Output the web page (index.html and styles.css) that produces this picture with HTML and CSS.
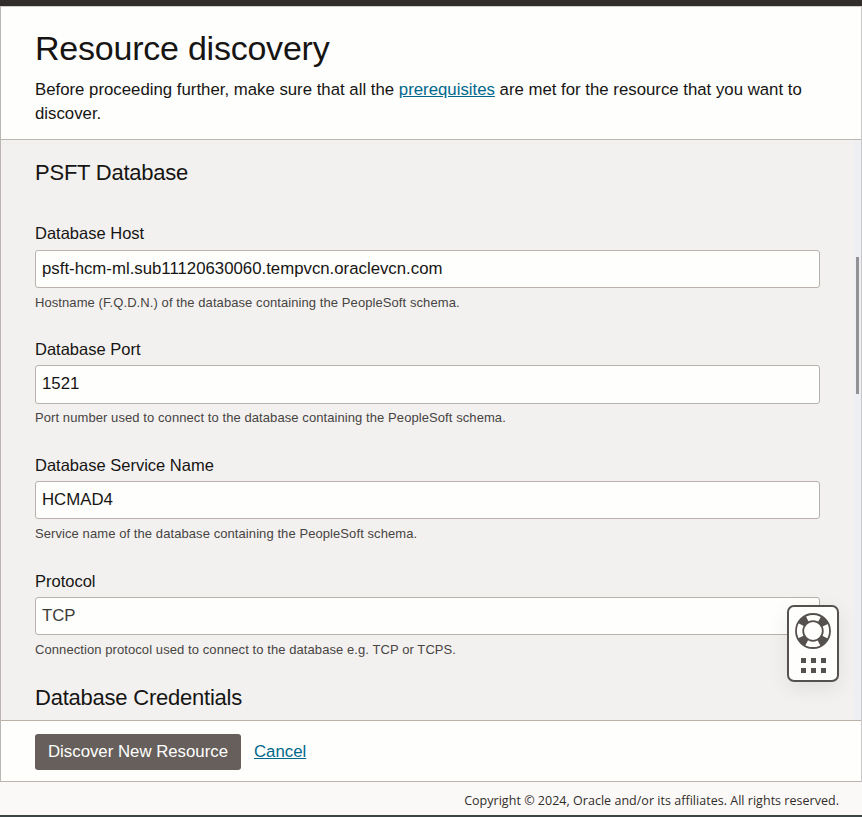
FILE: index.html
```html
<!DOCTYPE html>
<html lang="en">
<head>
<meta charset="utf-8">
<title>Resource discovery</title>
<link rel="stylesheet" href="styles.css">
</head>
<body>
<div class="topbar"></div>
<main class="panel">
  <header class="panel-header">
    <h1>Resource discovery</h1>
    <p>Before proceeding further, make sure that all the <a href="#">prerequisites</a> are met for the resource that you want to discover.</p>
  </header>
  <div class="panel-body">
    <form class="form">
      <h2>PSFT Database</h2>
      <div class="field field-first">
        <label for="host">Database Host</label>
        <input id="host" type="text" value="psft-hcm-ml.sub11120630060.tempvcn.oraclevcn.com">
        <p class="hint">Hostname (F.Q.D.N.) of the database containing the PeopleSoft schema.</p>
      </div>
      <div class="field field-tall">
        <label for="port">Database Port</label>
        <input id="port" type="text" value="1521">
        <p class="hint">Port number used to connect to the database containing the PeopleSoft schema.</p>
      </div>
      <div class="field">
        <label for="service">Database Service Name</label>
        <input id="service" type="text" value="HCMAD4">
        <p class="hint">Service name of the database containing the PeopleSoft schema.</p>
      </div>
      <div class="field">
        <label for="protocol">Protocol</label>
        <input id="protocol" class="muted" type="text" value="TCP">
        <p class="hint">Connection protocol used to connect to the database e.g. TCP or TCPS.</p>
      </div>
      <h2 class="credentials">Database Credentials</h2>
    </form>
    <div class="scroll-track"><div class="scroll-thumb"></div></div>
  </div>
  <div class="actions">
    <button type="button">Discover New Resource</button>
    <a href="#">Cancel</a>
  </div>
</main>
<footer class="copyright">Copyright © 2024, Oracle and/or its affiliates. All rights reserved.</footer>
<div class="help">
  <svg width="36" height="36" viewBox="0 0 36 36" fill="none" stroke="#55514e">
    <circle cx="18" cy="18" r="13.5" stroke-width="7" stroke-dasharray="8.4 12.806" stroke-dashoffset="-6.403"/>
    <circle cx="18" cy="18" r="17" stroke-width="1.8"/>
    <circle cx="18" cy="18" r="9.8" stroke-width="1.8"/>
  </svg>
  <div class="dots"><i></i><i></i><i></i><i></i><i></i><i></i></div>
</div>
</body>
</html>
```
FILE: styles.css
```css
* { box-sizing: border-box; }
body {
  margin: 0;
  height: 817px;
  display: flex;
  flex-direction: column;
  overflow: hidden;
  background: #fbf9f8;
  color: #161513;
  font: 16.8px/24px "Liberation Sans", Arial, sans-serif;
}
h1, h2, p { margin: 0; font-weight: 400; }
a { color: #00688c; text-underline-offset: 1px; }
.topbar { height: 6px; background: #312d2a; }
.panel {
  height: 776px;
  display: flex;
  flex-direction: column;
  border: 1px solid #bcb6b1;
  border-top-color: #d0ccc9;
  border-right-color: #c8c8cb;
  background: #fefefc;
}
.panel-header {
  height: 133px;
  padding: 20px 34px 0;
  border-bottom: 1px solid #bcb6b1;
}
h1 { font-size: 34px; line-height: 42px; margin-bottom: 9px; letter-spacing: -.23px; }
.panel-body {
  height: 580px;
  display: flex;
  overflow: hidden;
  background: #f3f1f0;
}
.form { flex: 1; padding: 19px 34px 0; }
h2 { font-size: 22px; line-height: 28px; letter-spacing: -.23px; }
.credentials { margin-top: -2px; }
.field { height: 116px; }
.field-first { margin-top: 35px; }
label { display: block; height: 27px; font-size: 16.5px; line-height: 22px; }
.field-first label { height: 28px; }
.field input {
  display: block;
  width: 785px;
  height: 38px;
  padding: 0 6px;
  border: 1px solid #b8b1ad;
  border-radius: 3px;
  background: #fefefc;
  color: #161513;
  font: inherit;
}
.field .muted { color: #3d3b39; }
.field-tall input { height: 39px; padding-bottom: 1px; }
.hint {
  margin-top: 6px;
  font-size: 13px;
  line-height: 18px;
  letter-spacing: .08px;
  color: #474442;
}
.field-tall .hint { margin-top: 5px; }
.scroll-track { width: 7px; padding-top: 117px; background: #eeeff3; }
.scroll-thumb { width: 3px; height: 137px; margin-left: 2px; background: #929294; }
.actions {
  height: 61px;
  padding: 13px 34px 0;
  display: flex;
  gap: 13px;
  border-top: 1px solid #bcb3a8;
}
.actions button {
  width: 206px;
  height: 36px;
  padding: 0;
  border: 0;
  border-radius: 3px;
  background: #665f5b;
  color: #fff;
  font: inherit;
}
.actions a { line-height: 36px; }
.copyright {
  flex: 1;
  padding: 8px 23px 0;
  border-bottom: 2px solid #3c4545;
  text-align: right;
  font: 12.5px/22px "Open Sans", "Noto Sans", sans-serif;
  letter-spacing: .025px;
  color: #312d2a;
}
.help {
  position: absolute;
  left: 787px;
  top: 605px;
  width: 52px;
  height: 77px;
  padding-top: 6px;
  border: 2px solid #55514e;
  border-radius: 7px;
  background: #fefefc;
  box-shadow: 0 6px 20px rgba(0, 0, 0, .08);
}
.help svg { display: block; margin: 0 auto; }
.dots {
  display: grid;
  grid-template-columns: repeat(3, 5px);
  gap: 5px;
  justify-content: center;
  margin-top: 9px;
}
.dots i { height: 5px; background: #55514e; }
```
